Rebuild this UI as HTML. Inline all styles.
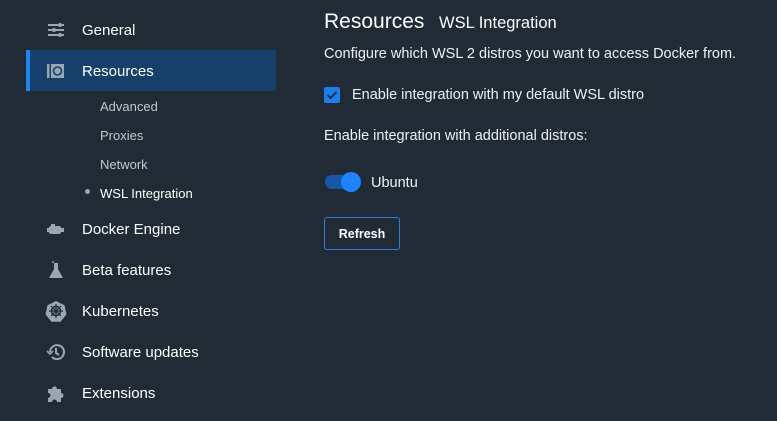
<!DOCTYPE html>
<html><head><meta charset="utf-8"><style>
*{margin:0;padding:0;box-sizing:border-box}
body{width:777px;height:421px;background:#202b35;font-family:"Liberation Sans",sans-serif;color:#fff;position:relative;overflow:hidden}
.it{position:absolute;left:26px;width:250px;height:41px;font-size:15px;line-height:43px}
.it span{position:absolute;left:56px}
.it svg{position:absolute;left:20px;top:11px}
.sel{background:#16406a;border-left:4px solid #1d86f5}
.sub{position:absolute;left:100px;font-size:13px;color:#c2c9d0}
.t{position:absolute;left:324px;font-size:14.5px;color:#eef1f4}
</style></head><body>
<div class="it" style="top:9px"><svg width="20" height="20" viewBox="0 0 20 20" fill="#9aa6b2"><rect x="2" y="4" width="16" height="2"/><rect x="2" y="9" width="16" height="2"/><rect x="2" y="14" width="16" height="2"/><circle cx="14" cy="5" r="2"/><circle cx="8" cy="10" r="2"/><circle cx="14" cy="15" r="2"/></svg><span>General</span></div>
<div class="it sel" style="top:50px"><svg width="20" height="20" viewBox="0 0 20 20" style="left:16px"><rect x="1" y="3" width="2.5" height="14" fill="#9aa6b2"/><rect x="5" y="3" width="13" height="14" fill="#9aa6b2"/><circle cx="11.5" cy="10" r="4" fill="none" stroke="#16406a" stroke-width="1.6"/></svg><span style="left:52px">Resources</span></div>
<div class="sub" style="top:99px">Advanced</div>
<div class="sub" style="top:128px">Proxies</div>
<div class="sub" style="top:157px">Network</div>
<div style="position:absolute;left:85px;top:189px;width:5px;height:5px;border-radius:50%;background:#9aa6b2"></div>
<div class="sub" style="top:186px;color:#fff">WSL Integration</div>
<div class="it" style="top:208px"><svg width="20" height="20" viewBox="0 0 20 20" fill="#9aa6b2"><rect x="5" y="5" width="4" height="2"/><rect x="3" y="7" width="12" height="8" rx="2"/><rect x="15" y="9" width="3" height="4"/><rect x="1" y="9" width="2" height="4"/></svg><span>Docker Engine</span></div>
<div class="it" style="top:249px"><svg width="20" height="20" viewBox="0 0 20 20" fill="#9aa6b2"><rect x="8" y="3" width="4" height="6"/><path d="M8 9h4l5 9H3z"/><circle cx="7" cy="2" r="1"/></svg><span>Beta features</span></div>
<div class="it" style="top:290px"><svg width="22" height="22" viewBox="0 0 22 22" style="left:19px;top:10px"><path d="M11 1l8.5 4.2 2 9.2-5.9 7.4H6.4L.5 14.4l2-9.2z" fill="#9aa6b2"/><circle cx="11" cy="11" r="4.5" fill="none" stroke="#202b35" stroke-width="1.5"/><path d="M11 4v14M4 11h14M6 6l10 10M16 6L6 16" stroke="#202b35" stroke-width="1.2"/></svg><span>Kubernetes</span></div>
<div class="it" style="top:331px"><svg width="20" height="20" viewBox="0 0 20 20" fill="none" stroke="#9aa6b2" stroke-width="2"><path d="M4 10a7 7 0 1 1 2 5"/><path d="M10 6v5l3 2"/><path d="M1 9l3 3 3-3" stroke-width="1.6"/></svg><span>Software updates</span></div>
<div class="it" style="top:372px"><svg width="20" height="20" viewBox="0 0 20 20" fill="#9aa6b2"><path d="M2 6h4a2.5 2.5 0 1 1 5 0h4v4a2.5 2.5 0 1 1 0 5v4h-4a2.5 2.5 0 1 0-5 0H2v-4a2.5 2.5 0 1 0 0-5z"/></svg><span>Extensions</span></div>

<div style="position:absolute;left:324px;top:10px;font-size:21px;color:#fff">Resources</div>
<div style="position:absolute;left:439px;top:14px;font-size:16.5px;color:#fff">WSL Integration</div>
<div class="t" style="top:46px">Configure which WSL 2 distros you want to access Docker from.</div>
<div style="position:absolute;left:324px;top:87px;width:16px;height:16px;border-radius:2px;background:#1d7ef0"><svg width="16" height="16" viewBox="0 0 16 16"><path d="M3.5 8l3 3 6-6" fill="none" stroke="#202b35" stroke-width="1.8"/></svg></div>
<div class="t" style="left:352px;top:87px">Enable integration with my default WSL distro</div>
<div class="t" style="top:128px">Enable integration with additional distros:</div>
<div style="position:absolute;left:325px;top:175px;width:34px;height:14px;border-radius:7px;background:#1558a6"></div>
<div style="position:absolute;left:341px;top:172px;width:20px;height:20px;border-radius:50%;background:#1d84ff"></div>
<div class="t" style="left:371px;top:175px">Ubuntu</div>
<div style="position:absolute;left:324px;top:217px;width:76px;height:33px;border:1px solid #2a7fe0;border-radius:3px;font-size:12.5px;font-weight:bold;text-align:center;line-height:33px">Refresh</div>
</body></html>
